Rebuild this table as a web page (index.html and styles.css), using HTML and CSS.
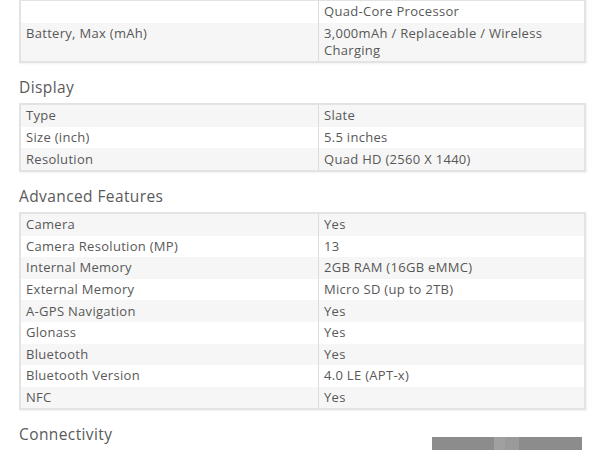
FILE: index.html
```html
<!DOCTYPE html>
<html>
<head>
<meta charset="utf-8">
<link rel="stylesheet" href="styles.css">
</head>
<body>
<div class="page">
  <table class="specs first">
    <tr class="odd"><td class="label"></td><td class="value">Quad-Core Processor</td></tr>
    <tr class="even"><td class="label">Battery, Max (mAh)</td><td class="value">3,000mAh / Replaceable / Wireless Charging</td></tr>
  </table>

  <h2 class="heading">Display</h2>
  <table class="specs">
    <tr class="even"><td class="label">Type</td><td class="value">Slate</td></tr>
    <tr class="odd"><td class="label">Size (inch)</td><td class="value">5.5 inches</td></tr>
    <tr class="even"><td class="label">Resolution</td><td class="value">Quad HD (2560 X 1440)</td></tr>
  </table>

  <h2 class="heading">Advanced Features</h2>
  <table class="specs">
    <tr class="even"><td class="label">Camera</td><td class="value">Yes</td></tr>
    <tr class="odd"><td class="label">Camera Resolution (MP)</td><td class="value">13</td></tr>
    <tr class="even"><td class="label">Internal Memory</td><td class="value">2GB RAM (16GB eMMC)</td></tr>
    <tr class="odd"><td class="label">External Memory</td><td class="value">Micro SD (up to 2TB)</td></tr>
    <tr class="even"><td class="label">A-GPS Navigation</td><td class="value">Yes</td></tr>
    <tr class="odd"><td class="label">Glonass</td><td class="value">Yes</td></tr>
    <tr class="even"><td class="label">Bluetooth</td><td class="value">Yes</td></tr>
    <tr class="odd"><td class="label">Bluetooth Version</td><td class="value">4.0 LE (APT-x)</td></tr>
    <tr class="even"><td class="label">NFC</td><td class="value">Yes</td></tr>
  </table>

  <h2 class="heading">Connectivity</h2>
</div>
<div class="floatbar"><span class="seg a"></span><span class="seg b"></span><span class="seg c"></span><span class="seg d"></span></div>
</body>
</html>
```

FILE: styles.css
```css
html, body {
  margin: 0;
  padding: 0;
  background: #ffffff;
  overflow: hidden;
}
body {
  font-family: "Open Sans", "DejaVu Sans", sans-serif;
  color: #585858;
  font-size: 13px;
  letter-spacing: 0.3px;
}
.page {
  padding-left: 19px;
  width: 567px;
  margin-top: -1px;
}
.specs {
  width: 567px;
  border-collapse: collapse;
  border: 2px solid #e3e3e3;
  box-shadow: 1px 1px 2px rgba(0,0,0,0.06);
  table-layout: fixed;
}
.specs td {
  padding: 2.3px 6px 2.3px 5px;
  line-height: 17px;
  vertical-align: top;
}
.specs td.label {
  width: 286px;
  border-right: 1px solid #dcdcdc;
}
.specs tr.even td { background: #f6f6f6; }
.specs tr.odd td { background: #ffffff; }
.heading {
  margin: 0;
  padding: 14px 0 6px 0;
  font-size: 15.5px;
  line-height: 20px;
  font-weight: normal;
  letter-spacing: 0.4px;
  color: #5a5a5a;
}
.floatbar {
  position: absolute;
  left: 432px;
  top: 437px;
  width: 150px;
  height: 20px;
  display: flex;
}
.seg { display: block; height: 100%; }
.seg.a { width: 62px; background: #8c8c8c; }
.seg.b { width: 11px; background: #a0a0a0; }
.seg.c { width: 14px; background: #9a9a9a; }
.seg.d { flex: 1; background: #8c8c8c; }
```
